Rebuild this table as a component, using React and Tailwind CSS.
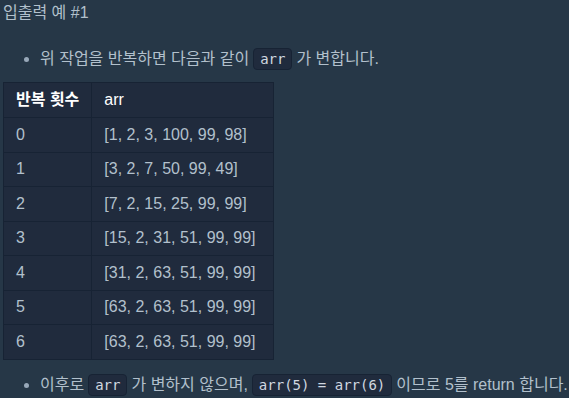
import React from 'react';

const ROWS = [
  ['0', '[1, 2, 3, 100, 99, 98]'],
  ['1', '[3, 2, 7, 50, 99, 49]'],
  ['2', '[7, 2, 15, 25, 99, 99]'],
  ['3', '[15, 2, 31, 51, 99, 99]'],
  ['4', '[31, 2, 63, 51, 99, 99]'],
  ['5', '[63, 2, 63, 51, 99, 99]'],
  ['6', '[63, 2, 63, 51, 99, 99]'],
];

const Code = ({ children }) => (
  <code className="mx-1 inline-block rounded-[4px] border border-[#172334] bg-[#202b3d] px-[6px] py-[1px] font-['DejaVu_Sans_Mono',monospace] text-[14px] leading-[18px] text-[#d0d8e0]">
    {children}
  </code>
);

export default function App() {
  return (
    <div className="h-[398px] w-[569px] overflow-hidden bg-[#263747] pl-[3px] font-['Liberation_Sans','Noto_Sans_CJK_KR',sans-serif] text-[16px] text-[#b2c0cc]">
      <div className="pt-[3px] leading-[20px]">입출력 예 #1</div>

      <ul className="mt-[24px] list-disc pl-[37px] marker:text-[#98a8b9]">
        <li className="leading-[24px]">
          위 작업을 반복하면 다음과 같이<Code>arr</Code>가 변합니다.
        </li>
      </ul>

      <table className="mt-[11px] w-[271px] border-collapse border border-[#172334] bg-[#202b3d] text-left">
        <thead>
          <tr className="h-[35px]">
            <th className="w-[88px] whitespace-nowrap border border-[#172334] px-[12px] font-semibold text-white">반복 횟수</th>
            <th className="border border-[#172334] px-[12px] font-normal text-white">arr</th>
          </tr>
        </thead>
        <tbody>
          {ROWS.map(([n, arr]) => (
            <tr key={n} className="h-[34.5px]">
              <td className="border border-[#172334] px-[12px]">{n}</td>
              <td className="whitespace-nowrap border border-[#172334] px-[12px]">{arr}</td>
            </tr>
          ))}
        </tbody>
      </table>

      <ul className="mt-[13px] list-disc pl-[37px] marker:text-[#98a8b9]">
        <li className="whitespace-nowrap leading-[24px]">
          이후로<Code>arr</Code>가 변하지 않으며,<Code>arr(5) = arr(6)</Code>이므로 5를 return 합니다.
        </li>
      </ul>
    </div>
  );
}
